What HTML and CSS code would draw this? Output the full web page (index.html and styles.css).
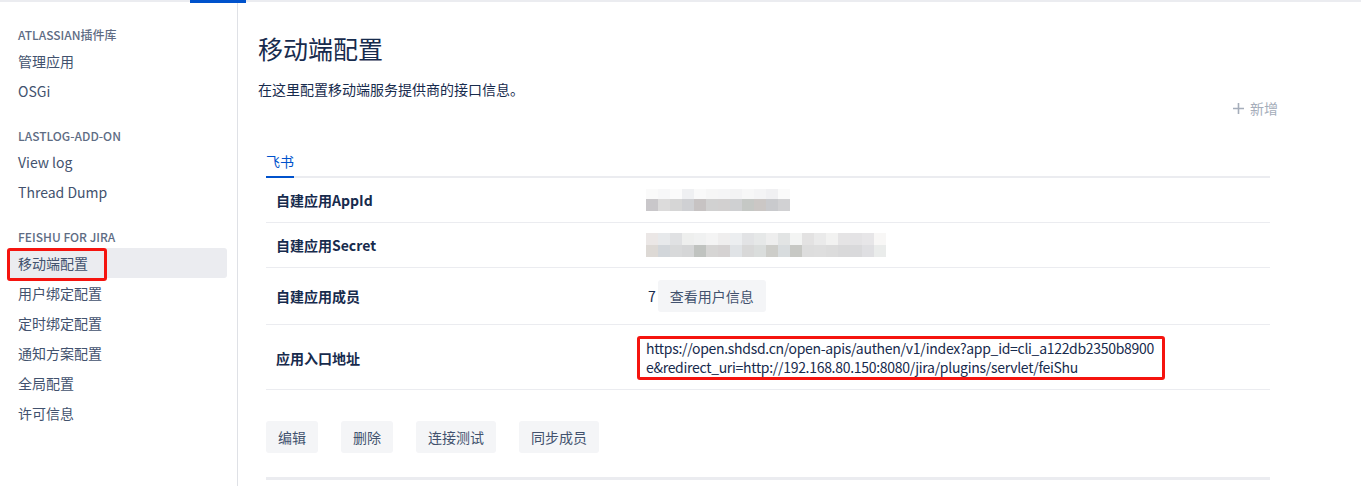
FILE: index.html
```html
<!DOCTYPE html>
<html lang="zh-CN">
<head>
  <meta charset="UTF-8" />
  <title>移动端配置</title>
  <link rel="stylesheet" href="styles.css">
</head>
<body>
  <div class="topbar"><span class="topbar-active"></span></div>
  <div class="page">
    <nav class="sidebar">
      <div class="nav-group">
        <div class="nav-heading">ATLASSIAN插件库</div>
        <a class="nav-item">管理应用</a>
        <a class="nav-item">OSGi</a>
      </div>
      <div class="nav-group">
        <div class="nav-heading">LASTLOG-ADD-ON</div>
        <a class="nav-item">View log</a>
        <a class="nav-item">Thread Dump</a>
      </div>
      <div class="nav-group">
        <div class="nav-heading">FEISHU FOR JIRA</div>
        <a class="nav-item selected">移动端配置<span class="mark-box"></span></a>
        <a class="nav-item">用户绑定配置</a>
        <a class="nav-item">定时绑定配置</a>
        <a class="nav-item">通知方案配置</a>
        <a class="nav-item">全局配置</a>
        <a class="nav-item">许可信息</a>
      </div>
    </nav>

    <main class="content">
      <h1 class="page-title">移动端配置</h1>
      <p class="page-desc">在这里配置移动端服务提供商的接口信息。</p>
      <div class="toolbar">
        <a class="add-link">
          <svg width="11" height="11" viewBox="0 0 11 11"><path d="M5.5 0v11M0 5.5h11" stroke="#a5adba" stroke-width="1.6"/></svg>
          新增
        </a>
      </div>

      <div class="tab-panel">
        <div class="tabs"><span class="tab active">飞书</span></div>

        <div class="row">
          <div class="row-label">自建应用AppId</div>
          <div class="row-value"><span class="blur blur-id"></span></div>
        </div>
        <div class="row row-secret">
          <div class="row-label">自建应用Secret</div>
          <div class="row-value"><span class="blur blur-secret"></span></div>
        </div>
        <div class="row row-members">
          <div class="row-label">自建应用成员</div>
          <div class="row-value"><span class="count">7</span><button class="btn">查看用户信息</button></div>
        </div>
        <div class="row row-url">
          <div class="row-label">应用入口地址</div>
          <div class="row-value"><span class="url-box">https://open.shdsd.cn/open-apis/authen/v1/index?app_id=cli_a122db2350b8900e&amp;redirect_uri=http://192.168.80.150:8080/jira/plugins/servlet/feiShu</span></div>
        </div>

        <div class="actions">
          <button class="btn">编辑</button>
          <button class="btn">删除</button>
          <button class="btn">连接测试</button>
          <button class="btn">同步成员</button>
        </div>
        <div class="panel-end"></div>
      </div>
    </main>
  </div>
</body>
</html>
```

FILE: styles.css
```css
* {
  box-sizing: border-box;
}

body {
  margin: 0;
  font-family: "Noto Sans CJK SC", "Noto Sans", sans-serif;
  font-size: 14px;
  color: #172b4d;
  background: #fff;
}

.topbar {
  height: 3px;
  border-top: 2px solid #ebecf0;
  position: relative;
}

.topbar-active {
  position: absolute;
  left: 190px;
  top: -2px;
  width: 56px;
  height: 3px;
  background: #0052cc;
}

.page {
  display: flex;
  min-height: 483px;
}

.sidebar {
  width: 238px;
  flex-shrink: 0;
  border-right: 1px solid #dfe1e6;
  padding: 24px 10px 0 8px;
}

.nav-group {
  display: flex;
  flex-direction: column;
  margin-bottom: 22px;
}

.nav-heading {
  font-size: 12px;
  line-height: 16px;
  font-weight: 500;
  color: #5e6c84;
  padding-left: 10px;
  margin-bottom: 3px;
}

.nav-item {
  position: relative;
  display: block;
  height: 30px;
  line-height: 30px;
  padding-left: 10px;
  color: #42526e;
  border-radius: 3px;
}

.nav-item.selected {
  background: #ebecf0;
}

.mark-box {
  position: absolute;
  left: -1px;
  top: 0;
  width: 100px;
  height: 33px;
  border: 3px solid #f5140f;
  border-radius: 3px;
}

.content {
  flex: 1;
  padding: 30px 83px 0 20px;
}

.page-title {
  margin: 0;
  font-size: 25px;
  line-height: 30px;
  font-weight: 400;
  color: #172b4d;
}

.page-desc {
  margin: 16px 0 0;
  line-height: 20px;
}

.toolbar {
  display: flex;
  justify-content: flex-end;
  margin-top: -1px;
}

.add-link {
  display: flex;
  align-items: center;
  gap: 6px;
  line-height: 20px;
  color: #a5adba;
}

.tab-panel {
  margin: 33px 8px 0;
}

.tabs {
  border-bottom: 2px solid #ebecf0;
  display: flex;
}

.tab {
  line-height: 20px;
  padding-bottom: 5px;
  margin-bottom: -2px;
  color: #0052cc;
}

.tab.active {
  border-bottom: 2px solid #0052cc;
}

.row {
  display: flex;
  align-items: center;
  padding: 11px 0;
  border-bottom: 1px solid #ebecf0;
}

.row-secret {
  padding: 10px 0;
}

.row-members {
  padding: 12px 0;
}

.row-url {
  padding: 11px 0 9px;
}

.row-label {
  width: 380px;
  padding-left: 10px;
  font-weight: 700;
  line-height: 20px;
}

.row-value {
  display: flex;
  align-items: center;
  line-height: 20px;
}

.blur {
  display: block;
  background-repeat: no-repeat;
  background-position: 0 0, 0 100%;
}

.blur-id {
  width: 144px;
  height: 22px;
  background-size: 100% 10px, 100% 12px;
  background-image:
    linear-gradient(to right, #fafafa 0 12px, #f7f7f8 12px 24px, #fbfbfb 24px 36px, #eff0f2 36px 48px, #f9f9f9 48px 60px, #f6f6f6 60px 72px, #f5f5f6 72px 84px, #f3f3f4 84px 96px, #f7f7f7 96px 108px, #f4f4f5 108px 120px, #f0f0f2 120px 132px, #fafafa 132px 144px),
    linear-gradient(to right, #c9c7ca 0 12px, #dcdbdb 12px 24px, #d6d6d6 24px 36px, #cfd0d3 36px 48px, #c7c3c3 48px 60px, #d1d1d1 60px 72px, #d2d0d0 72px 84px, #cfd0d2 84px 96px, #c5c8c5 96px 108px, #cbc7c5 108px 120px, #c9cacd 120px 132px, #d1d1d3 132px 144px);
}

.blur-secret {
  width: 240px;
  height: 24px;
  background-size: 100% 12px, 100% 12px;
  background-image:
    linear-gradient(to right, #ebe7e6 0 12px, #e7e9eb 12px 24px, #e0e1e3 24px 36px, #eeefee 36px 48px, #f0f1f1 48px 60px, #f4f4f4 60px 72px, #efeeee 72px 84px, #eceef0 84px 96px, #e2e3e5 96px 108px, #e6e8e8 108px 120px, #eeeeee 120px 132px, #e2e4e4 132px 144px, #f3f4f3 144px 156px, #e3e2e2 156px 168px, #eaeaea 168px 180px, #f2f2f1 180px 192px, #e5e4e5 192px 204px, #e4e3e5 204px 216px, #e7e6e8 216px 228px, #f8f7f6 228px 240px),
    linear-gradient(to right, #ddd9d5 0 12px, #d2d6da 12px 24px, #d8d9da 24px 36px, #d5d6d7 36px 48px, #c0c3c0 48px 60px, #d6d5d4 60px 72px, #d5d2d2 72px 84px, #e0e3e6 84px 96px, #d8d8d8 96px 108px, #dadddc 108px 120px, #cdcdc9 120px 132px, #d8dcde 132px 144px, #c7c8c4 144px 156px, #dddddd 156px 168px, #dedede 168px 180px, #dcdcdc 180px 192px, #d9d9da 192px 204px, #d9d9db 204px 216px, #dfdfe2 216px 228px, #eaeceb 228px 240px);
}

.count {
  margin: 0 2px 0 2px;
}

.btn {
  font-family: inherit;
  font-size: 14px;
  line-height: 20px;
  height: 32px;
  padding: 0 12px;
  border: none;
  border-radius: 3px;
  background: #f4f5f7;
  color: #42526e;
}

.url-box {
  display: block;
  width: 528px;
  margin-left: -9px;
  padding: 0 6px;
  border: 3px solid #f5140f;
  border-radius: 3px;
  line-height: 19px;
  letter-spacing: -0.3px;
  word-break: break-all;
  font-weight: 400;
}

.actions {
  display: flex;
  gap: 23px;
  margin-top: 31px;
}

.panel-end {
  margin-top: 24px;
  height: 3px;
  background: #ebecf0;
}
```
